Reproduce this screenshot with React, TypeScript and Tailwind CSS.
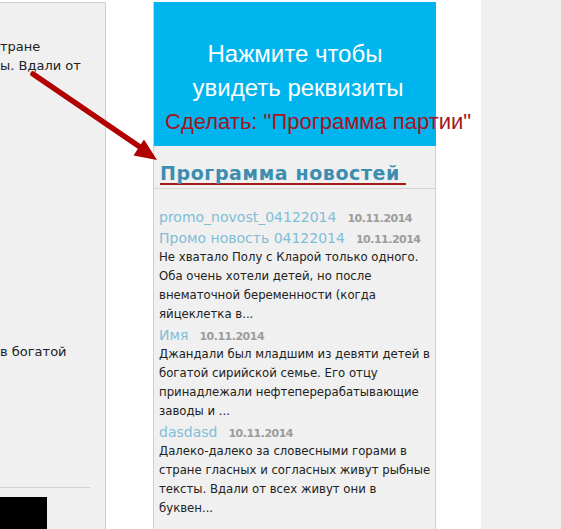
import React from "react";

const bodyFont = "font-['DejaVu_Sans_Condensed','DejaVu_Sans',sans-serif]";
const sans = "font-['DejaVu_Sans',sans-serif]";

function Item({ title, lines }: { title: string; lines?: string[] }) {
  return (
    <div className="mt-[4px] first:mt-0">
      <div className={`h-[17px] whitespace-nowrap text-[14px] leading-[17px] ${sans}`}>
        <span className="text-[#80bed8]">{title}</span>
        <span className="ml-[11px] text-[11px] font-bold leading-none tracking-[-0.5px] text-[#9c9c9c]">
          10.11.2014
        </span>
      </div>
      {lines && (
        <div className={`text-[13px] leading-[19px] text-[#222222] whitespace-nowrap ${bodyFont}`}>
          {lines.map((l, i) => (
            <div key={i}>{l}</div>
          ))}
        </div>
      )}
    </div>
  );
}

export default function App() {
  return (
    <div className={`relative flex h-[529px] w-[561px] overflow-hidden bg-white ${sans}`}>
      {/* left panel */}
      <div className="mt-[2px] flex w-[106px] shrink-0 flex-col overflow-hidden border-t border-r border-[#d0d0d0] bg-[#f0f0f0] text-[13px] leading-[19px] text-[#222222]">
        <div className="whitespace-nowrap pt-[34px]">
          <div>тране</div>
          <div>ы. Вдали от</div>
        </div>
        <div className="mt-[267px] whitespace-nowrap">в богатой</div>
        <div className="mt-[126px] h-px w-[90px] shrink-0 bg-[#d0d0d0]" />
        <div className="mt-[9px] w-[47px] flex-1 bg-black" />
      </div>

      {/* gap */}
      <div className="w-[47px] shrink-0" />

      {/* center panel */}
      <div className="mt-[2px] flex w-[283px] shrink-0 flex-col border-l border-r border-[#d0d0d0] bg-[#f0f0f0]">
        <div className="-mr-px h-[144px] shrink-0 bg-[#00b5ee] pt-[35px] font-['Liberation_Sans',sans-serif]">
          <div className="text-center text-[24px] leading-[34px] text-white">Нажмите чтобы</div>
          <div className="pl-[6px] text-center text-[24px] leading-[34px] text-white">увидеть реквизиты</div>
          <div className="mt-[3px] whitespace-nowrap pl-[11px] text-[22px] leading-[28px] text-[#a3141c]">
            Сделать: "Программа партии"
          </div>
        </div>
        <div className="pl-[6px] pt-[17px]">
          <span className="inline-block border-b-2 border-[#a31b1b] pr-[6px] text-[19px] font-bold leading-[20px] tracking-[0.6px] text-[#3d8db0]">
            Программа новостей
          </span>
        </div>
        <div className="mt-[1px] h-px bg-[#d6d6d6]" />
        <div className="pl-[5px] pt-[20px]">
          <Item title="promo_novost_04122014" />
          <Item
            title="Промо новость 04122014"
            lines={[
              "Не хватало Полу с Кларой только одного.",
              "Оба очень хотели детей, но после",
              "внематочной беременности (когда",
              "яйцеклетка в...",
            ]}
          />
          <Item
            title="Имя"
            lines={[
              "Джандали был младшим из девяти детей в",
              "богатой сирийской семье. Его отцу",
              "принадлежали нефтеперерабатывающие",
              "заводы и ...",
            ]}
          />
          <Item
            title="dasdasd"
            lines={[
              "Далеко-далеко за словесными горами в",
              "стране гласных и согласных живут рыбные",
              "тексты. Вдали от всех живут они в",
              "буквен...",
            ]}
          />
        </div>
      </div>

      {/* gap */}
      <div className="w-[45px] shrink-0" />

      {/* right gray */}
      <div className="flex-1 bg-[#f0f0f0]" />

      {/* arrow overlay */}
      <svg
        className="pointer-events-none absolute left-0 top-0"
        width="561"
        height="529"
        viewBox="0 0 561 529"
      >
        <line x1="33" y1="74" x2="140" y2="147" stroke="#b00000" strokeWidth="5.5" strokeLinecap="round" />
        <polygon points="157,160 133.5,155.5 144,139.5" fill="#b00000" />
      </svg>
    </div>
  );
}
